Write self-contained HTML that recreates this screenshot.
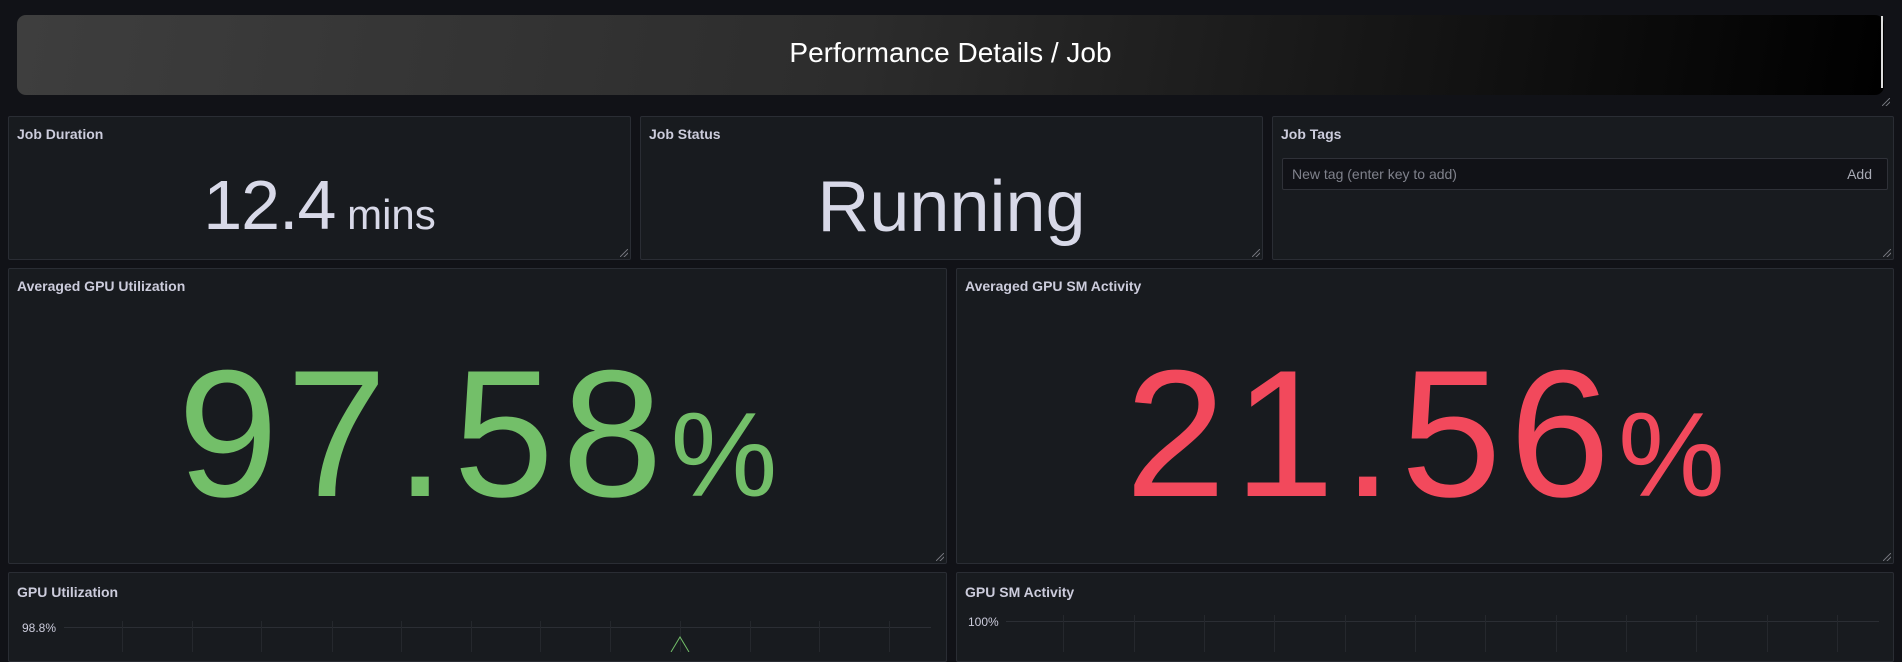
<!DOCTYPE html>
<html><head><meta charset="utf-8"><style>
*{box-sizing:border-box;margin:0;padding:0}
body{width:1902px;height:652px;overflow:hidden;background:#111217;font-family:"Liberation Sans",sans-serif;position:relative;color:#ccccdc}
.p{position:absolute;background:#181b1f;border:1px solid #2a2d34;border-radius:2px;overflow:hidden}
.t{position:absolute;left:8px;top:9px;font-size:14px;font-weight:bold;color:#ccccdc}
.v{position:absolute;left:0;right:0;text-align:center;white-space:nowrap}
.rh{position:absolute;right:2px;bottom:2px;width:8px;height:8px;background:linear-gradient(135deg,transparent 45%,#6e7077 45%,#6e7077 55%,transparent 55%,transparent 70%,#6e7077 70%,#6e7077 80%,transparent 80%)}
</style></head><body>
<div style="position:absolute;left:17px;top:15px;width:1867px;height:80px;border-radius:9px;background:linear-gradient(100deg,#3e3e3e 0%,#2c2c2c 45%,#000 100%)">
<div style="position:absolute;left:0;right:0;top:22px;text-align:center;font-size:28px;color:#fff">Performance Details / Job</div>
<div style="position:absolute;right:1px;top:1px;width:2px;height:72px;background:#ddd"></div>
</div>
<div class="rh" style="right:12px;bottom:546px"></div>

<div class="p" style="left:8px;top:116px;width:623px;height:144px"><div class="t">Job Duration</div>
<div class="v" style="top:53px;font-size:70px;color:#d8d9e8;letter-spacing:-1px;line-height:1">12.4<span style="font-size:42px;letter-spacing:0"> mins</span></div><div class="rh"></div></div>
<div class="p" style="left:640px;top:116px;width:623px;height:144px"><div class="t">Job Status</div>
<div class="v" style="top:51px;font-size:72px;color:#d8d9e8;line-height:1.1">Running</div><div class="rh"></div></div>
<div class="p" style="left:1272px;top:116px;width:622px;height:144px"><div class="t">Job Tags</div>
<div style="position:absolute;left:9px;top:41px;width:606px;height:32px;background:#111217;border:1px solid #2f3138;border-radius:2px;font-size:14px;color:#80828c;line-height:30px;padding-left:9px">New tag (enter key to add)<span style="position:absolute;right:15px;color:#a8aab4">Add</span></div><div class="rh"></div></div>

<div class="p" style="left:8px;top:268px;width:939px;height:296px"><div class="t">Averaged GPU Utilization</div>
<div class="v" style="top:57px;font-size:181px;color:#73bf69;line-height:1.2;letter-spacing:8px">97.58<span style="font-size:120px;letter-spacing:0">%</span></div><div class="rh"></div></div>
<div class="p" style="left:956px;top:268px;width:938px;height:296px"><div class="t">Averaged GPU SM Activity</div>
<div class="v" style="top:57px;font-size:181px;color:#f2495c;line-height:1.2;letter-spacing:8px">21.56<span style="font-size:120px;letter-spacing:0">%</span></div><div class="rh"></div></div>

<div class="p" style="left:8px;top:572px;width:939px;height:90px"><div class="t" style="top:11px">GPU Utilization</div></div>
<div class="p" style="left:956px;top:572px;width:938px;height:90px"><div class="t" style="top:11px">GPU SM Activity</div></div>
<svg width="1902" height="652" style="position:absolute;left:0;top:0">
<g stroke="#2b2e34" stroke-width="1">
<line x1="64" y1="627.5" x2="931" y2="627.5"/>
<line x1="1006" y1="621.5" x2="1879" y2="621.5"/>
</g>
<g stroke="#25282d" stroke-width="1">
<path d="M122.5 621V652M192.5 621V652M261.5 621V652M332.5 621V652M401.5 621V652M471.5 621V652M540.5 621V652M610.5 621V652M680.5 621V652M750.5 621V652M819.5 621V652M889.5 621V652"/>
<path d="M1063.5 615V652M1134.5 615V652M1204.5 615V652M1274.5 615V652M1345.5 615V652M1415.5 615V652M1485.5 615V652M1556.5 615V652M1626.5 615V652M1696.5 615V652M1767.5 615V652M1837.5 615V652"/>
</g>
<path d="M671 652L680 637L689 652" fill="none" stroke="#73bf69" stroke-width="1"/>
<g font-family="Liberation Sans,sans-serif" font-size="12" fill="#ccccdc">
<text x="22" y="632">98.8%</text>
<text x="968" y="626">100%</text>
<text x="972" y="661">80%</text>
</g>
</svg>
</body></html>
